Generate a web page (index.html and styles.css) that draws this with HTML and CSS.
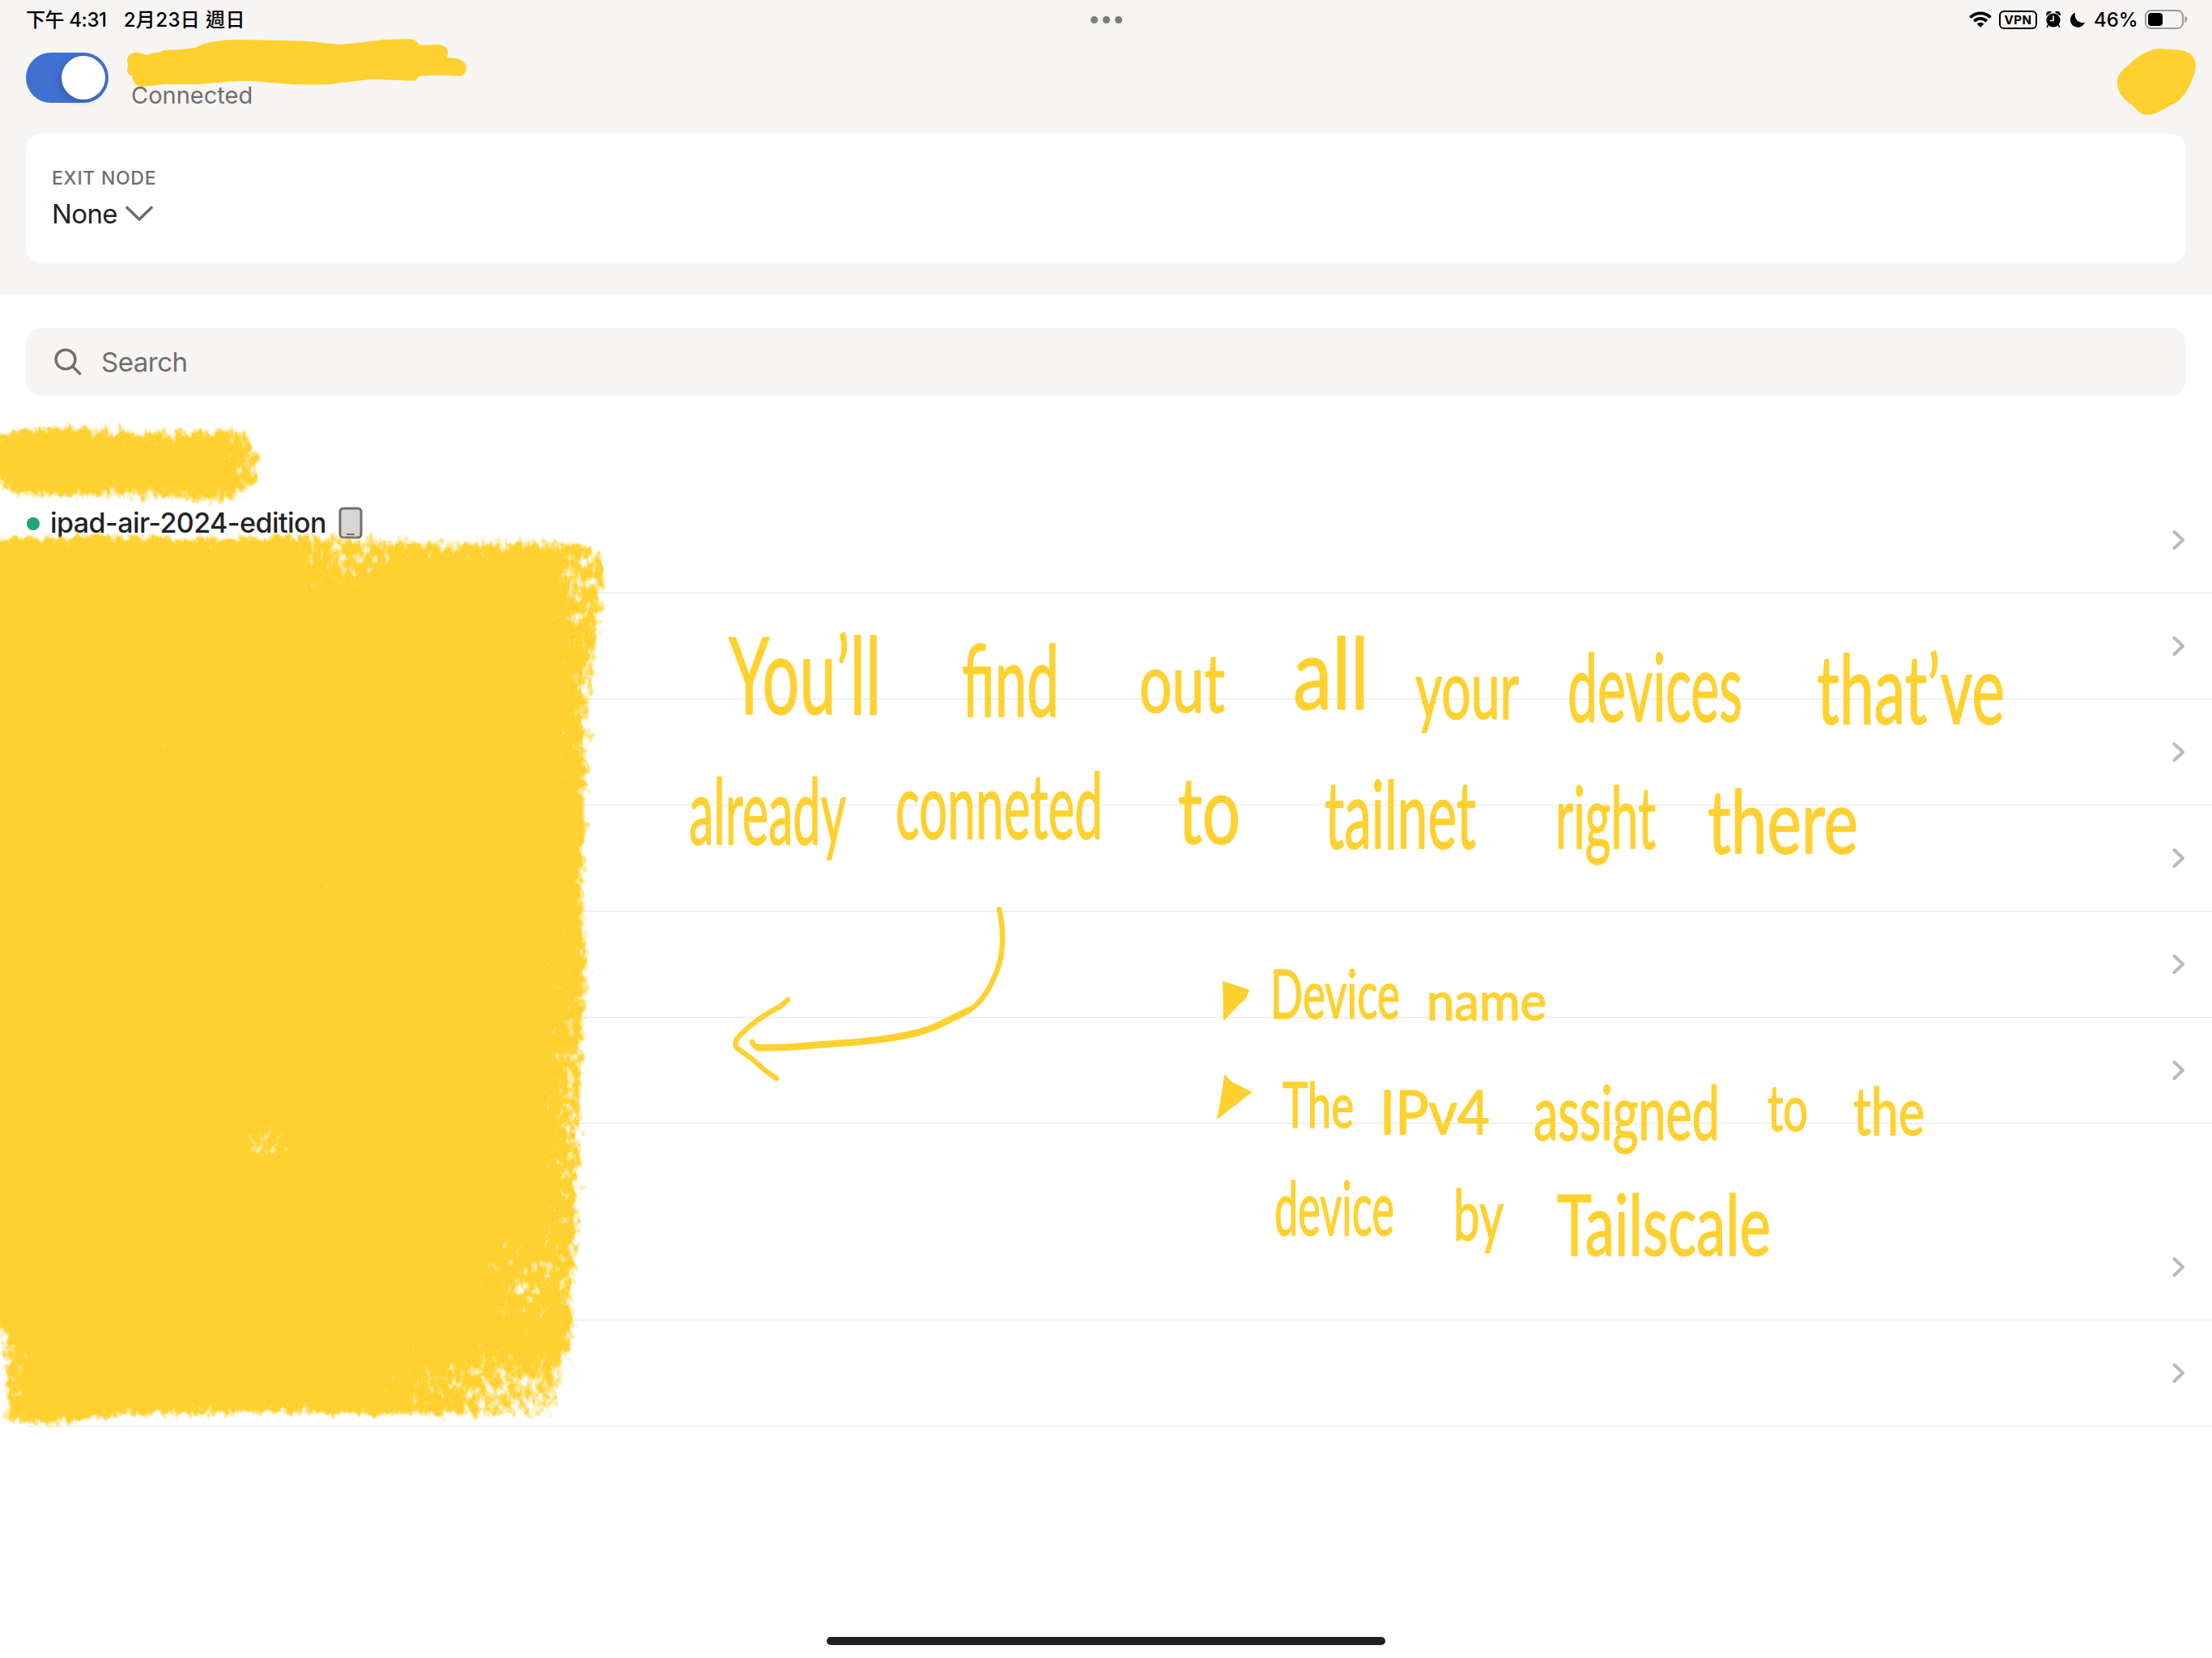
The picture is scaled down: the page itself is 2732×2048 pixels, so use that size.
FILE: index.html
```html
<!DOCTYPE html>
<html lang="zh-Hant">
<head>
<meta charset="utf-8">
<title>Tailscale</title>
<link rel="stylesheet" href="styles.css">
</head>
<body>
<div class="screen">
  <header class="top">
    <div class="status">
      <div class="status-left"><span class="time">下午 4:31</span><span class="date">2月23日 週日</span></div>
      <div class="dots"><i></i><i></i><i></i></div>
      <div class="status-right">
        <svg class="wifi" viewBox="0 0 28 20" width="28" height="20"><g fill="none" stroke="#000" stroke-width="3.8"><path d="M1.5 7.6A17.6 17.6 0 0 1 26.5 7.6"/><path d="M6.2 12.2A11 11 0 0 1 21.8 12.2"/></g><path d="M14 20l-4.3-4.4a6.2 6.2 0 0 1 8.6 0z"/></svg>
        <span class="vpn">VPN</span>
        <svg class="alarm" viewBox="0 0 18 20" width="18" height="20"><circle cx="9" cy="11" r="8.6"/><path d="M1 4.2A3.2 3.2 0 0 1 5.6.8zM17 4.2A3.2 3.2 0 0 0 12.4.8zM3 16l-1.6 3.4M15 16l1.6 3.4" stroke="#000" stroke-width="1.6" stroke-linecap="round"/><path d="M9 5.5V11.5H4.8" fill="none" stroke="#f6f5f3" stroke-width="1.7"/></svg>
        <svg class="moon" viewBox="0 0 18 19" width="18" height="19"><path d="M6.2.6A9.3 9.3 0 1 0 18 12.6 9.4 9.4 0 0 1 6.2.6z"/></svg>
        <span class="percent">46%</span>
        <svg class="battery" viewBox="0 0 54 24" width="54" height="24"><rect x="1" y="1" width="46" height="22" rx="6.5" fill="none" stroke="#9b9a99" stroke-width="2"/><rect x="4" y="4" width="18" height="16" rx="4"/><path d="M49.4 8v8c4-1.6 4-6.4 0-8z" fill="#9b9a99"/></svg>
      </div>
    </div>
    <div class="account">
      <div class="toggle"><i></i></div>
      <div class="connected">Connected</div>
    </div>
    <section class="exit">
      <div class="exit-label">EXIT NODE</div>
      <div class="exit-value"><span>None</span><svg viewBox="0 0 36 20" width="36" height="20"><path d="M3 2.5L18 17 33 2.5"/></svg></div>
    </section>
  </header>

  <main>
    <div class="search"><svg viewBox="0 0 36 36" width="34" height="34"><circle cx="14.8" cy="14.8" r="12.6"/><path d="M24 24l9.5 9.5"/></svg><span>Search</span></div>
    <div class="group first"></div>
    <div class="row"><div class="device"><i></i><span>ipad-air-2024-edition</span><svg viewBox="0 0 30 40" width="30" height="40"><rect x="2" y="2" width="26" height="36" rx="4" fill="#d9d7d6" stroke="#706e6d" stroke-width="3"/><path d="M10 34h10" stroke="#706e6d" stroke-width="2"/></svg></div><svg class="chev" viewBox="0 0 16 26"><path d="M2.5 3L13 13 2.5 23"/></svg></div>
    <div class="row"><svg class="chev" viewBox="0 0 16 26"><path d="M2.5 3L13 13 2.5 23"/></svg></div>
    <div class="row"><svg class="chev" viewBox="0 0 16 26"><path d="M2.5 3L13 13 2.5 23"/></svg></div>
    <div class="row"><svg class="chev" viewBox="0 0 16 26"><path d="M2.5 3L13 13 2.5 23"/></svg></div>
    <div class="row"><svg class="chev" viewBox="0 0 16 26"><path d="M2.5 3L13 13 2.5 23"/></svg></div>
    <div class="row"><svg class="chev" viewBox="0 0 16 26"><path d="M2.5 3L13 13 2.5 23"/></svg></div>
    <div class="group"></div>
    <div class="row"><svg class="chev" viewBox="0 0 16 26"><path d="M2.5 3L13 13 2.5 23"/></svg></div>
    <div class="row"><svg class="chev" viewBox="0 0 16 26"><path d="M2.5 3L13 13 2.5 23"/></svg></div>
  </main>
  <div class="home"></div>

  <!-- marker annotations over the app -->
  <svg class="ink" viewBox="0 0 2732 2048" width="2732" height="2048">
    <defs>
      <filter id="chalk" filterUnits="userSpaceOnUse" x="-40" y="480" width="840" height="1320" color-interpolation-filters="sRGB">
        <feGaussianBlur in="SourceGraphic" stdDeviation="8" result="soft"/>
        <feTurbulence type="fractalNoise" baseFrequency="0.11 0.07" numOctaves="4" seed="7" result="grain"/>
        <feComposite in="soft" in2="grain" operator="arithmetic" k2="3.1" k3="2.6" k4="-2.45" result="mix"/>
        <feFlood flood-color="#ffd130"/>
        <feComposite in2="mix" operator="in"/>
      </filter>
      <radialGradient id="worn"><stop offset="0" stop-color="#000" stop-opacity=".4"/><stop offset="1" stop-color="#000" stop-opacity="0"/></radialGradient>
      <mask id="wear" maskUnits="userSpaceOnUse" x="-80" y="480" width="880" height="1320">
        <rect x="-80" y="480" width="880" height="1320" fill="#fff"/>
        <g fill="url(#worn)">
          <ellipse cx="425" cy="690" rx="90" ry="60"/>
          <ellipse cx="560" cy="668" rx="170" ry="38"/>
          <ellipse cx="715" cy="710" rx="55" ry="90"/>
          <ellipse cx="725" cy="860" rx="40" ry="200"/>
          <ellipse cx="650" cy="1585" rx="80" ry="80"/>
          <ellipse cx="590" cy="1715" rx="170" ry="70"/>
          <ellipse cx="665" cy="1745" rx="90" ry="90"/>
          <ellipse cx="5" cy="1680" rx="40" ry="90"/>
          <ellipse cx="325" cy="1412" rx="50" ry="34"/>
          <ellipse cx="700" cy="1380" rx="34" ry="300"/>
          <ellipse cx="200" cy="535" rx="140" ry="24"/>
          <ellipse cx="310" cy="575" rx="38" ry="60"/>
          <ellipse cx="150" cy="612" rx="180" ry="20"/>
        </g>
      </mask>
    </defs>
    <g filter="url(#chalk)"><g mask="url(#wear)" fill="#ffd130">
      <path d="M-6 536L60 527 180 529 290 530 312 540 324 568 320 594 304 610 274 620 130 616 30 614 -6 596z"/>
      <path d="M-80 664L120 662 250 666 400 660 520 666 640 668 712 668C742 672 752 695 749 722L740 790 731 870 724 1000 719 1100 725 1200 719 1350 716 1500 711 1560 707 1640 695 1700 686 1750 590 1752 450 1749 380 1745 150 1747 72 1758 10 1758 0 1640 -80 1620z"/>
    </g></g>
    <g class="fillink">
      <path d="M158 75C158 68 164 65 170 66L182 69Q190 65 198 66L202 63Q222 63 241 60L252 55Q265 51 294 50L347 51Q380 51 400 54L420 56 441 54 473 50 506 49Q515 50 517 57L543 56Q553 58 552 67L551 72 563 73Q575 76 575 85 573 93 567 93 543 91 518 93L512 99Q490 98 469 97 455 97 448 98L408 103Q383 104 359 103L310 99H294L245 103H204L175 106Q165 105 164 93 158 91 158 87L159 80z"/>
      <path d="M2667 61L2695 63Q2711 67 2711 82 2710 94 2701 110 2694 122 2685 127L2674 133 2662 139Q2646 144 2640 135L2634 129Q2616 118 2616 102 2616 92 2623 87L2637 74Q2653 62 2667 61z"/>
      <path d="M1511 1213L1542 1223 1538 1233 1529 1241 1512 1259z"/>
      <path d="M1513 1329L1522 1338 1545 1349 1519 1369 1504 1381 1508 1362z"/>
    </g>
    <g class="lineink">
      <path d="M1234 1123Q1239 1144 1238 1167C1237 1195 1218 1237 1196 1248L1160 1266C1133 1280 1100 1284 1060 1287"/>
      <path class="heavy" d="M1196 1248L1160 1266C1133 1279 1090 1284 1060 1287L993 1292Q960 1295 936 1294"/>
      <path d="M936 1294Q931 1293 929 1287M973 1235L964 1243Q932 1259 911 1282 906 1291 911 1295L930 1309Q947 1325 959 1332"/>
    </g>
    <g class="hand">
      <text x="900" y="882" font-size="132" textLength="188" lengthAdjust="spacingAndGlyphs">You’ll</text>
      <text x="1188" y="885" font-size="122" textLength="120" lengthAdjust="spacingAndGlyphs">find</text>
      <text x="1407" y="880" font-size="100" textLength="106" lengthAdjust="spacingAndGlyphs">out</text>
      <text x="1597" y="876" font-size="122" textLength="94" lengthAdjust="spacingAndGlyphs">all</text>
      <text x="1748" y="888" font-size="100" textLength="128" lengthAdjust="spacingAndGlyphs">your</text>
      <text x="1936" y="891" font-size="116" textLength="216" lengthAdjust="spacingAndGlyphs">devices</text>
      <text x="2244" y="894" font-size="118" textLength="232" lengthAdjust="spacingAndGlyphs">that’ve</text>
      <text x="851" y="1043" font-size="112" textLength="194" lengthAdjust="spacingAndGlyphs">already</text>
      <text x="1106" y="1036" font-size="112" textLength="256" lengthAdjust="spacingAndGlyphs">conneted</text>
      <text x="1455" y="1042" font-size="114" textLength="77" lengthAdjust="spacingAndGlyphs">to</text>
      <text x="1636" y="1048" font-size="116" textLength="187" lengthAdjust="spacingAndGlyphs">tailnet</text>
      <text x="1921" y="1048" font-size="106" textLength="124" lengthAdjust="spacingAndGlyphs">right</text>
      <text x="2109" y="1054" font-size="108" textLength="186" lengthAdjust="spacingAndGlyphs">there</text>
      <text x="1569" y="1258" font-size="84" textLength="160" lengthAdjust="spacingAndGlyphs">Device</text>
      <text x="1762" y="1260" font-size="66" textLength="148" lengthAdjust="spacingAndGlyphs">name</text>
      <text x="1584" y="1393" font-size="78" textLength="88" lengthAdjust="spacingAndGlyphs">The</text>
      <text x="1704" y="1401" font-size="76" textLength="136" lengthAdjust="spacingAndGlyphs">IPv4</text>
      <text x="1894" y="1408" font-size="94" textLength="230" lengthAdjust="spacingAndGlyphs">assigned</text>
      <text x="2183" y="1397" font-size="80" textLength="50" lengthAdjust="spacingAndGlyphs">to</text>
      <text x="2289" y="1402" font-size="82" textLength="88" lengthAdjust="spacingAndGlyphs">the</text>
      <text x="1574" y="1526" font-size="94" textLength="148" lengthAdjust="spacingAndGlyphs">device</text>
      <text x="1795" y="1532" font-size="88" textLength="62" lengthAdjust="spacingAndGlyphs">by</text>
      <text x="1923" y="1551" font-size="104" textLength="264" lengthAdjust="spacingAndGlyphs">Tailscale</text>
    </g>
  </svg>
</div>
</body>
</html>
```
FILE: styles.css
```css
* { box-sizing: border-box; }
body { margin: 0; background: #fff; font-family: Inter, "Noto Sans CJK TC", sans-serif; color: #232222; }
.screen { position: relative; width: 2732px; height: 2048px; overflow: hidden; background: #fff; }
svg { display: block; flex: none; }

.top { height: 365px; padding: 0 32px; background: #f6f5f3; }
.status { display: grid; grid-template-columns: 1fr auto 1fr; align-items: center; height: 48px; color: #000; }
.status-left { display: flex; gap: 21px; padding-bottom: 3px; font-size: 24px; font-weight: 500; white-space: nowrap; }
.time { letter-spacing: -0.4px; }
.date { letter-spacing: 0.4px; }
.dots { display: flex; gap: 6px; }
.dots i { width: 9px; height: 9px; border-radius: 50%; background: #7c7b7a; }
.status-right { display: flex; align-items: center; justify-content: flex-end; margin-right: -3px; }
.wifi { margin-right: 1px; }
.vpn { width: 47px; height: 23px; margin-left: 8px; border: 2px solid #000; border-radius: 6px; font-size: 15px; font-weight: 700; line-height: 19px; text-align: center; letter-spacing: 0.6px; }
.alarm { margin-left: 11px; }
.moon { margin-left: 12px; }
.percent { width: 53px; margin-left: 11px; font-size: 24px; font-weight: 500; white-space: nowrap; }
.battery { margin-left: 10px; }

.account { display: flex; gap: 28px; height: 117px; padding-top: 17px; }
.toggle { display: flex; justify-content: flex-end; width: 102px; height: 62px; padding: 4px; border-radius: 31px; background: #3f70d2; }
.toggle i { width: 54px; height: 54px; border-radius: 50%; background: #fff; box-shadow: -2px 3px 10px rgba(0, 0, 0, .18); }
.connected { padding-top: 35px; font-size: 29px; line-height: 36px; color: #706e6d; }

.exit { display: flex; flex-direction: column; height: 160px; padding: 40px 32px; border-radius: 20px; background: #fff; }
.exit-label { font-size: 23px; line-height: 30px; font-weight: 500; letter-spacing: .7px; color: #706e6d; }
.exit-value { display: flex; align-items: center; gap: 9px; margin-top: 9px; font-size: 33px; line-height: 40px; letter-spacing: -.6px; }
.exit-value path, .search path, .search circle { fill: none; stroke: #706e6d; stroke-width: 3.6; stroke-linecap: round; stroke-linejoin: round; }

main { padding-top: 40px; }
.search { display: flex; align-items: center; gap: 24px; height: 84px; margin: 0 32px; padding-left: 35px; border-radius: 20px; background: #f6f5f3; font-size: 33px; letter-spacing: -.5px; color: #706e6d; }
.group { height: 112px; }
.group.first { height: 113px; }
.row { display: flex; justify-content: flex-end; align-items: center; height: 131px; margin-left: 32px; padding-right: 33px; border-bottom: 1px solid #e5e5e5; }
.device { display: flex; align-items: center; flex: 1; height: 44px; margin-bottom: 43px; font-size: 34px; font-weight: 500; letter-spacing: -.55px; }
.device i { width: 16px; height: 16px; margin: 2px 13px 0 1px; border-radius: 50%; background: #1ea672; }
.device svg { margin-left: 15px; }
.chev { width: 16px; height: 26px; }
.chev path { fill: none; stroke: #bbb; stroke-width: 4; stroke-linecap: round; stroke-linejoin: round; }

.home { position: absolute; left: 1021px; bottom: 16px; width: 690px; height: 10px; border-radius: 5px; background: #221f20; }

.ink { position: absolute; left: 0; top: 0; pointer-events: none; }
.fillink { fill: #ffd130; stroke: #ffd130; stroke-width: 2; stroke-linejoin: round; }
.lineink { fill: none; stroke: #ffd130; stroke-width: 6.5; stroke-linecap: round; stroke-linejoin: round; }
.lineink .heavy { stroke-width: 8.5; }
.hand { font-family: Lato, Inter, sans-serif; fill: #ffd130; stroke: #ffd130; stroke-width: 1.6; stroke-linejoin: round; }
```
